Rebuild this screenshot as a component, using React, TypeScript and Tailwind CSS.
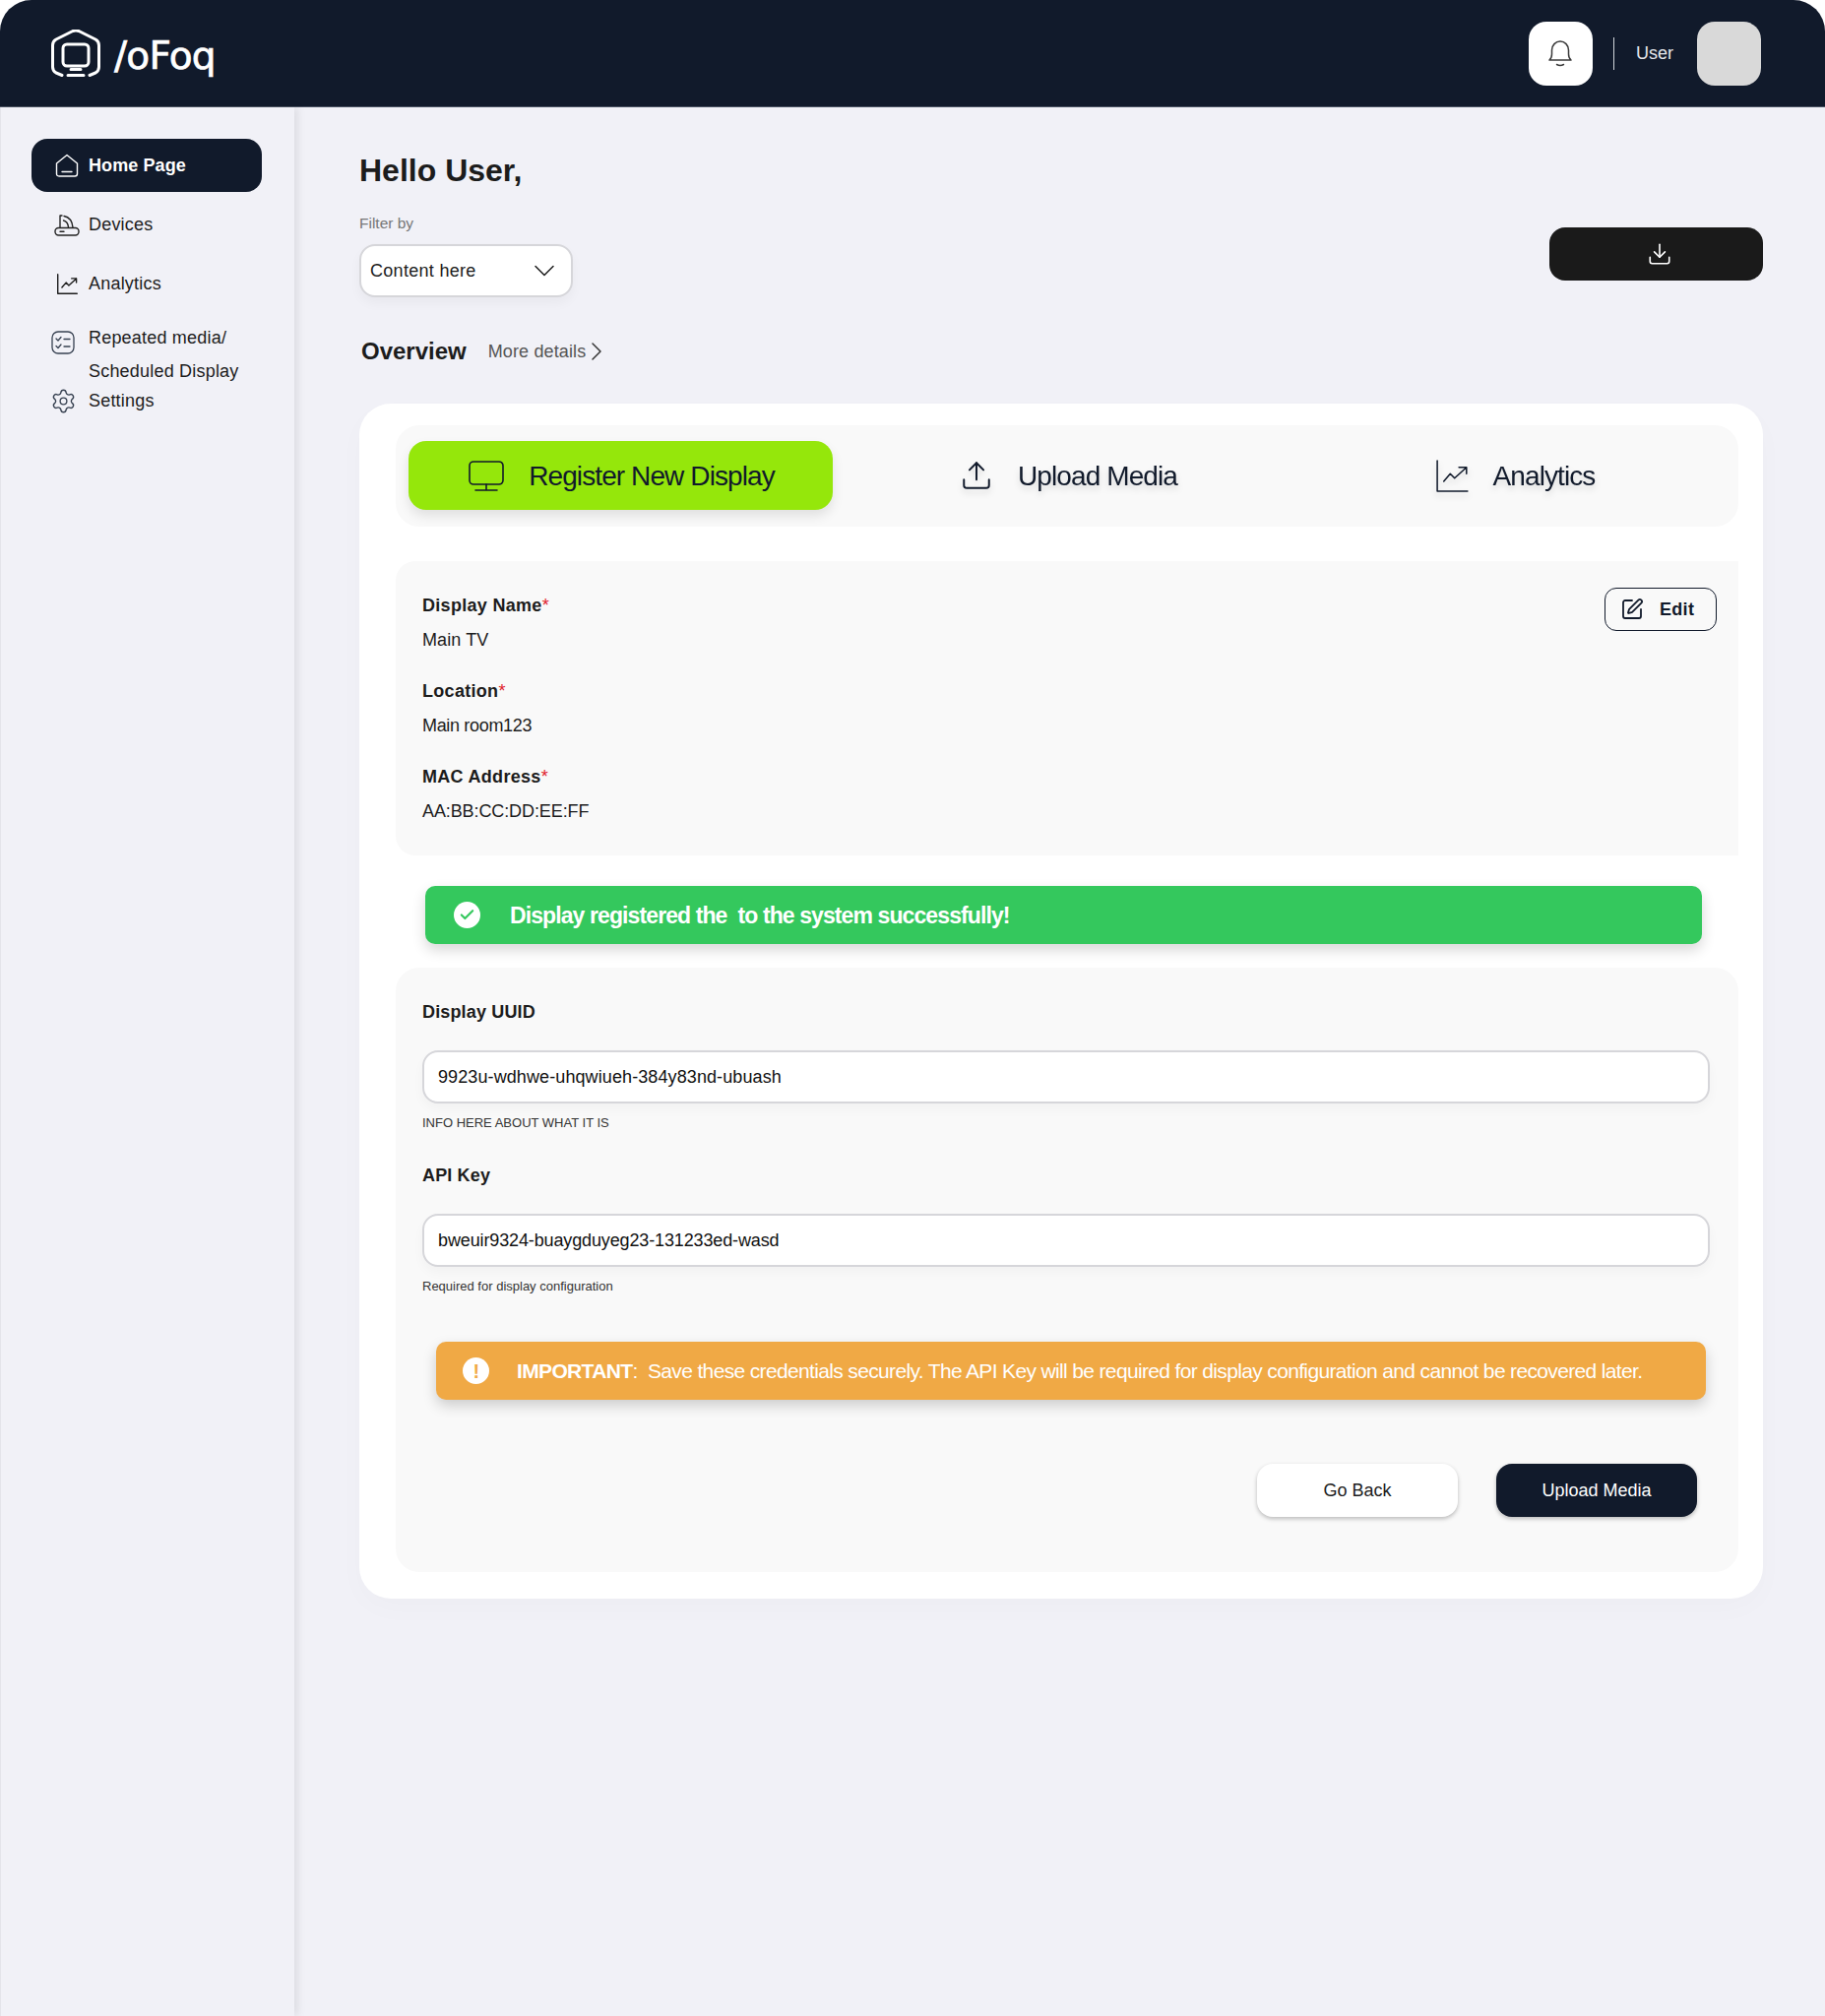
import type { ReactNode } from "react";
import { ChevronDown, ChevronRight, Download, Upload, SquarePen, Check, Settings } from "lucide-react";

const font = "font-['Liberation_Sans',Arial,sans-serif]";

function LogoMark() {
  return (
    <svg width="50" height="48" viewBox="0 0 50 48" fill="none" stroke="#fff" strokeWidth="3" strokeLinecap="round" strokeLinejoin="round">
      <path d="M11 46.5 L5 44 Q1.5 42 1.5 38 V16 Q1.5 12 5 10 L22 1.5 Q25 0.5 28 1.5 L45 10 Q48.5 12 48.5 16 V38 Q48.5 42 45 44 L39 46.5" />
      <rect x="12" y="15" width="26" height="22" rx="4" />
      <path d="M20 40.5 H30 M17 46.5 H33" />
    </svg>
  );
}

function BellIcon() {
  return (
    <svg width="24" height="27" viewBox="0 0 24 27" fill="none" stroke="#3a3a3a" strokeWidth="1.5" strokeLinecap="round" strokeLinejoin="round">
      <path d="M1 20 H23 M1 20 Q3.5 18 3.5 14 V10 A8.5 9 0 0 1 20.5 10 V14 Q20.5 18 23 20" />
      <path d="M8.5 24.5 Q12 26.5 15.5 24.5" />
    </svg>
  );
}

function HomeIcon() {
  return (
    <svg width="24" height="24" viewBox="0 0 24 24" fill="none" stroke="#fff" strokeWidth="1.4" strokeLinejoin="round" strokeLinecap="round">
      <path d="M1.5 10 L12 1.5 L22.5 10 V20.5 Q22.5 23 20 23 H4 Q1.5 23 1.5 20.5 Z" />
      <path d="M7 18.5 H17" />
    </svg>
  );
}

function RouterIcon() {
  return (
    <svg width="26" height="22" viewBox="0 0 26 22" fill="none" stroke="#222" strokeWidth="1.4" strokeLinecap="round" strokeLinejoin="round">
      <rect x="1" y="13.5" width="24" height="7.5" rx="3.5" />
      <path d="M6 17.3 H10" />
      <path d="M6 13 V1 H8" />
      <path d="M10 1.5 Q18 3 19 13 M9.5 6 Q14 7 14.5 13" />
    </svg>
  );
}

function ChartIcon({ size, color, stroke }: { size: number; color: string; stroke: number }) {
  return (
    <svg width={size} height={size} viewBox="0 0 30 30" fill="none" stroke={color} strokeWidth={stroke} strokeLinecap="round" strokeLinejoin="round">
      <path d="M1 1 V29 H29" />
      <path d="M7 20 L13 13 L17 17 L28 7 M21 7 H28 V13" />
    </svg>
  );
}

function ChecklistIcon() {
  return (
    <svg width="24" height="24" viewBox="0 0 24 24" fill="none" stroke="#374151" strokeWidth="1.3" strokeLinecap="round" strokeLinejoin="round">
      <rect x="1" y="1" width="22" height="22" rx="6" />
      <path d="M5 8 L7 10 L10 6.5 M5 15.5 L7 17.5 L10 14 M13 8.5 H19 M13 16 H19" />
    </svg>
  );
}

function MonitorIcon() {
  return (
    <svg width="36" height="31" viewBox="0 0 36 31" fill="none" stroke="#111a2b" strokeWidth="1.6" strokeLinecap="round" strokeLinejoin="round">
      <rect x="1" y="1" width="34" height="23" rx="4" />
      <path d="M18 24 V30 M7 30 H29" />
    </svg>
  );
}

function NavItem({ icon, label, className, iconClass }: { icon: ReactNode; label: ReactNode; className?: string; iconClass?: string }) {
  return (
    <div className={`flex items-center text-[18px] tracking-[0.2px] text-[#1c1c1c] ${className ?? ""}`}>
      <span className={`w-[44px] flex justify-center shrink-0 ${iconClass ?? ""}`}>{icon}</span>
      <span>{label}</span>
    </div>
  );
}

function Tab({ icon, label, active }: { icon: ReactNode; label: string; active?: boolean }) {
  return (
    <div
      className={`flex items-center justify-center gap-[25px] pl-[2px] rounded-[18px] h-[70px] text-[#111a2b] text-[28px] tracking-[-0.9px] ${
        active ? "bg-[#95e70b] shadow-[0_6px_12px_rgba(0,0,0,0.1)]" : "drop-shadow-[0_4px_3px_rgba(0,0,0,0.14)]"
      }`}
    >
      {icon}
      <span className="mt-[1px]">{label}</span>
    </div>
  );
}

function Field({ label, value, valueClass }: { label: string; value: string; valueClass?: string }) {
  return (
    <div className="h-[87px]">
      <div className="text-[18px] font-bold text-[#1c1c1c] leading-[24px] tracking-[0.3px]">
        {label}
        <span className="text-[#e11d2e] font-normal">*</span>
      </div>
      <div className={`text-[18px] text-[#1c1c1c] leading-[24px] mt-[11px] ${valueClass ?? "tracking-[-0.1px]"}`}>{value}</div>
    </div>
  );
}

function CredField({ label, value, hint, valueClass }: { label: string; value: string; hint: string; valueClass: string }) {
  return (
    <div>
      <div className="text-[18px] font-bold text-[#1c1c1c] leading-[24px] tracking-[0.15px]">{label}</div>
      <div className={`mt-[27px] h-[54px] rounded-[16px] border-2 border-[#d6d6da] bg-white flex items-center px-[14px] pt-[1px] text-[18px] text-[#111] shadow-[0_6px_12px_rgba(0,0,0,0.03)] ${valueClass}`}>
        {value}
      </div>
      <div className="mt-[11px] text-[13px] leading-[18px] text-[#333]">{hint}</div>
    </div>
  );
}

export default function App() {
  return (
    <div className={`${font} w-[1854px] h-[2048px] bg-white overflow-hidden`}>
      <div className="w-full h-full rounded-t-[32px] overflow-hidden bg-[#f1f1f7] flex flex-col">
        {/* Top bar */}
        <header className="h-[109px] shrink-0 bg-[#111a2b] border-b border-[#4b5363] flex items-center pl-[52px] pr-[65px]">
          <LogoMark />
          <span className="ml-[14px] mt-[4px] font-['DejaVu_Sans',sans-serif] text-white text-[39px] leading-none tracking-[-0.8px] [-webkit-text-stroke:0.7px_white]">/oFoq</span>
          <div className="ml-auto flex items-center">
            <div className="w-[65px] h-[65px] rounded-[18px] bg-white flex items-center justify-center">
              <BellIcon />
            </div>
            <div className="w-px h-[33px] bg-[#d1d5db] ml-[21px]" />
            <span className="ml-[22px] text-[18px] text-[#e5e7eb]">User</span>
            <div className="ml-[24px] w-[65px] h-[65px] rounded-[18px] bg-[#d9d9d9]" />
          </div>
        </header>

        <div className="flex flex-1 min-h-0">
          {/* Sidebar */}
          <aside className="w-[299px] shrink-0 bg-[#f1f1f7] border-l border-[#e4e4ea] shadow-[4px_0_8px_rgba(0,0,0,0.08)] pt-[32px] pl-[31px]">
            <div className="w-[234px] h-[54px] rounded-[16px] bg-[#111a2b] flex items-center text-white font-bold text-[18px] tracking-[0.1px]">
              <span className="ml-[24px] mr-[10px] flex"><HomeIcon /></span>
              Home Page
            </div>
            <div className="mt-[14px] ml-[14px]">
              <NavItem className="h-[39px]" icon={<RouterIcon />} label="Devices" />
              <NavItem className="h-[39px] mt-[21px]" icon={<ChartIcon size={21} color="#1c1c1c" stroke={2} />} label="Analytics" />
              <NavItem
                className="mt-[18px] leading-[34px] !items-start"
                iconClass="pr-[8px] mt-[10px]"
                icon={<ChecklistIcon />}
                label={
                  <>
                    Repeated media/
                    <br />
                    Scheduled Display
                  </>
                }
              />
              <NavItem className="h-[24px] mt-[1px]" iconClass="pr-[8px]" icon={<Settings size={27} strokeWidth={1.2} className="text-[#374151] shrink-0" />} label="Settings" />
            </div>
          </aside>

          {/* Main */}
          <main className="flex-1 pl-[66px] pr-[63px] pt-[44px] min-w-0">
            <h1 className="text-[32px] font-bold leading-[40px] text-[#1c1c1c]">Hello User,</h1>
            <div className="flex items-end justify-between mt-[24px]">
              <div>
                <div className="text-[15.5px] leading-[20px] text-[#777]">Filter by</div>
                <div className="mt-[11px] w-[217px] h-[54px] rounded-[16px] border-2 border-[#d6d6da] bg-white flex items-center justify-between pl-[9px] pr-[9px] text-[18px] tracking-[0.3px] text-[#1c1c1c] shadow-[0_6px_12px_rgba(0,0,0,0.04)]">
                  Content here
                  <ChevronDown size={36} strokeWidth={1} className="shrink-0" />
                </div>
              </div>
              <div className="w-[217px] h-[54px] mb-[17px] pl-[7px] rounded-[16px] bg-[#1a1a1a] flex items-center justify-center">
                <Download size={26} strokeWidth={1.5} className="text-white" />
              </div>
            </div>

            <div className="flex items-center mt-[39px] ml-[2px] h-[32px]">
              <span className="text-[24px] font-bold text-[#1c1c1c]">Overview</span>
              <span className="ml-[22px] text-[18px] text-[#555] tracking-[0.13px]">More details</span>
              <ChevronRight size={32} strokeWidth={1.1} className="-ml-[5px] text-[#333]" />
            </div>

            {/* Card */}
            <section className="mt-[37px] h-[1214px] rounded-[32px] bg-white pt-[22px] pl-[37px] pr-[25px] shadow-[0_10px_30px_rgba(0,0,0,0.02)]">
              <div className="h-[103px] rounded-[24px] bg-[#f9f9f9] grid grid-cols-3 gap-[23px] pl-[13px] pr-[12px] pt-[16px]">
                <Tab active icon={<MonitorIcon />} label="Register New Display" />
                <Tab icon={<Upload size={34} strokeWidth={1.4} />} label="Upload Media" />
                <Tab icon={<ChartIcon size={33} color="#111a2b" stroke={1.4} />} label="Analytics" />
              </div>

              <div className="relative mt-[35px] h-[299px] rounded-tl-[20px] rounded-bl-[20px] bg-[#f9f9f9] pl-[27px] pt-[33px]">
                <Field label="Display Name" value="Main TV" valueClass="tracking-[0.1px]" />
                <Field label="Location" value="Main room123" valueClass="tracking-[-0.33px]" />
                <Field label="MAC Address" value="AA:BB:CC:DD:EE:FF" />
                <div className="absolute top-[27px] right-[22px] w-[114px] h-[44px] rounded-[12px] border border-[#111a2b] flex items-center pl-[15px] gap-[16px] text-[18px] font-bold tracking-[0.3px] text-[#111a2b]">
                  <SquarePen size={24} strokeWidth={1.8} />
                  Edit
                </div>
              </div>

              <div className="mt-[31px] ml-[30px] w-[1297px] h-[59px] rounded-[10px] bg-[#34c85d] flex items-center text-white text-[23px] font-bold tracking-[-0.9px] shadow-[0_6px_14px_rgba(0,0,0,0.16)]">
                <span className="ml-[29px] w-[27px] h-[27px] rounded-full bg-white flex items-center justify-center">
                  <Check size={17} strokeWidth={3} className="text-[#34c85d]" />
                </span>
                <span className="ml-[30px] mt-[1px]">Display registered the&nbsp; to the system successfully!</span>
              </div>

              <div className="mt-[24px] h-[614px] rounded-[24px] bg-[#f9f9f9] pl-[27px] pr-[29px] pt-[33px]">
                <CredField label="Display UUID" value="9923u-wdhwe-uhqwiueh-384y83nd-ubuash" hint="INFO HERE ABOUT WHAT IT IS" valueClass="tracking-[0.1px]" />
                <div className="mt-[32px]">
                  <CredField label="API Key" value="bweuir9324-buaygduyeg23-131233ed-wasd" hint="Required for display configuration" valueClass="tracking-[-0.13px]" />
                </div>

                <div className="mt-[47px] ml-[14px] mr-[4px] h-[59px] rounded-[10px] bg-[#f0a945] flex items-center text-white text-[21px] tracking-[-0.65px] whitespace-nowrap shadow-[0_6px_14px_rgba(0,0,0,0.18)]">
                  <span className="ml-[27px] w-[27px] h-[27px] rounded-full bg-white flex items-center justify-center text-[#f0a945] font-bold text-[20px]">!</span>
                  <span className="ml-[28px] mt-[1px]">
                    <b>IMPORTANT</b>:&nbsp; Save these credentials securely. The API Key will be required for display configuration and cannot be recovered later.
                  </span>
                </div>

                <div className="mt-[65px] flex justify-end gap-[39px] pr-[13px]">
                  <div className="w-[204px] h-[54px] rounded-[16px] bg-white flex items-center justify-center text-[18px] text-[#1c1c1c] shadow-[0_2px_4px_rgba(0,0,0,0.25)]">Go Back</div>
                  <div className="w-[204px] h-[54px] rounded-[16px] bg-[#111a2b] flex items-center justify-center text-[18px] text-white shadow-[0_2px_4px_rgba(0,0,0,0.25)]">Upload Media</div>
                </div>
              </div>
            </section>
          </main>
        </div>
      </div>
    </div>
  );
}
